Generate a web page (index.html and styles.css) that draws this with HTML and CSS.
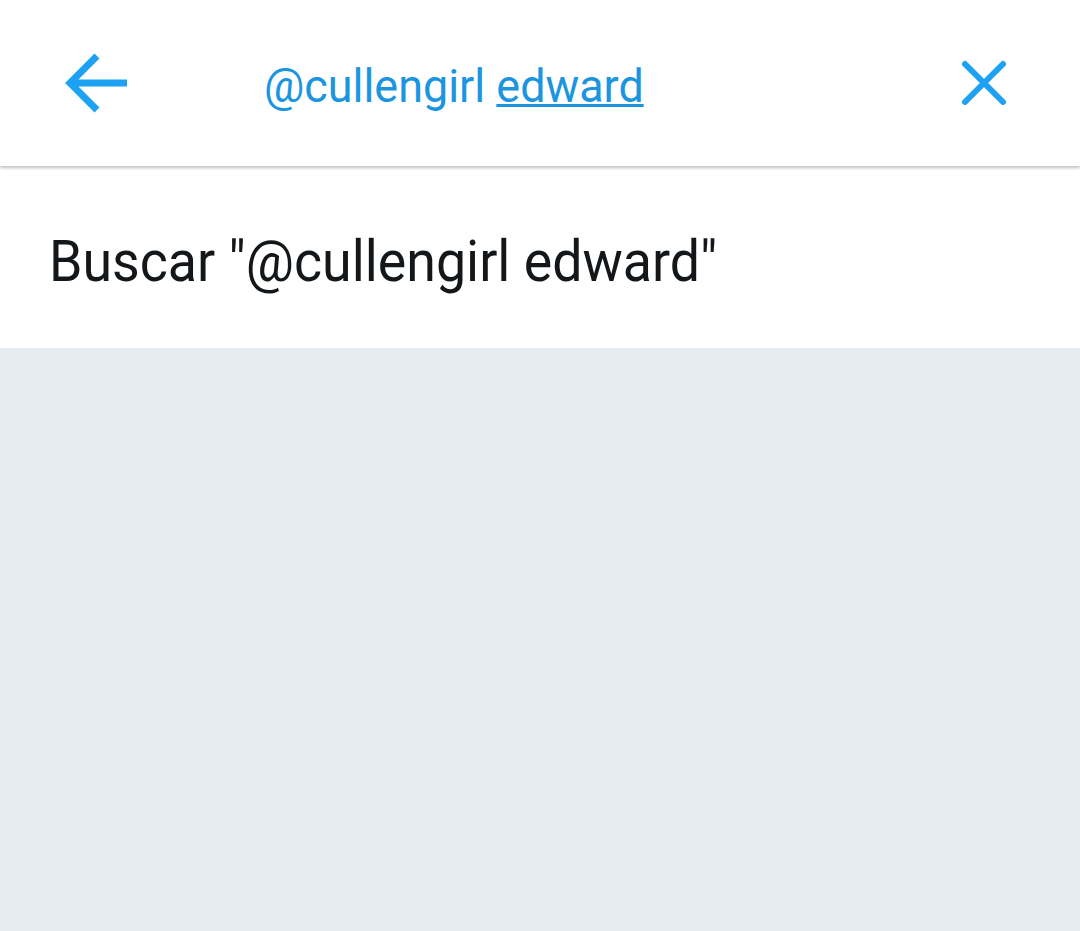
FILE: index.html
```html
<!DOCTYPE html>
<html lang="es">
<head>
    <meta charset="UTF-8">
    <meta name="viewport" content="width=device-width, initial-scale=1.0">
    <title>Buscar</title>
    <link rel="stylesheet" href="styles.css">
</head>
<body>

    <header class="search-bar">
        <button class="icon-button back-button" aria-label="Atrás">
            <svg width="64" height="64" viewBox="0 0 64 64">
                <path d="M6 32 H63 M33 5 L6 32 L33 59" fill="none" stroke="currentColor" stroke-width="7" stroke-linecap="butt" stroke-linejoin="miter"/>
            </svg>
        </button>
        <div class="query"><span class="query-text">@cullengirl <span class="query-word">edward</span></span></div>
        <button class="icon-button clear-button" aria-label="Borrar">
            <svg width="52" height="52" viewBox="0 0 52 52">
                <path d="M7 7 L45 45 M45 7 L7 45" fill="none" stroke="currentColor" stroke-width="6" stroke-linecap="round"/>
            </svg>
        </button>
    </header>

    <div class="suggestion"><span class="suggestion-text">Buscar "@cullengirl edward"</span></div>

    <main class="results"></main>

</body>
</html>
```

FILE: styles.css
```css
:root {
    --blue: #1da1f2;
    --link-blue: #1b95e0;
    --text-color: #14171a;
    --page-bg: #e6ecf0;
}

body, html {
    height: 100%;
    margin: 0;
    font-family: Roboto, 'Noto Sans', sans-serif;
    background-color: var(--page-bg);
    overflow: hidden;
}

.search-bar {
    height: 166px;
    background: #fff;
    display: flex;
    align-items: center;
    padding: 0 70px 0 64px;
    box-shadow: 0 2px 3px rgba(0, 0, 0, 0.25);
    position: relative;
    z-index: 1;
}

.icon-button {
    background: none;
    border: none;
    padding: 0;
    color: var(--blue);
    display: flex;
}

.query {
    flex: 1;
    margin-left: 136px;
    margin-top: 4px;
    font-size: 47px;
    line-height: 1;
    color: var(--link-blue);
}

.query-text {
    display: inline-block;
    transform: scaleX(0.955);
    transform-origin: left center;
}

.query-word {
    text-decoration: underline;
    text-decoration-thickness: 3px;
    text-underline-offset: 2px;
}

.suggestion {
    height: 182px;
    background: #fff;
    padding: 67px 49px 0;
    box-sizing: border-box;
    font-size: 57px;
    line-height: 1;
    color: var(--text-color);
}

.suggestion-text {
    display: inline-block;
    transform: scaleX(0.942);
    transform-origin: left center;
}

.results {
    height: calc(100% - 348px);
}
```
